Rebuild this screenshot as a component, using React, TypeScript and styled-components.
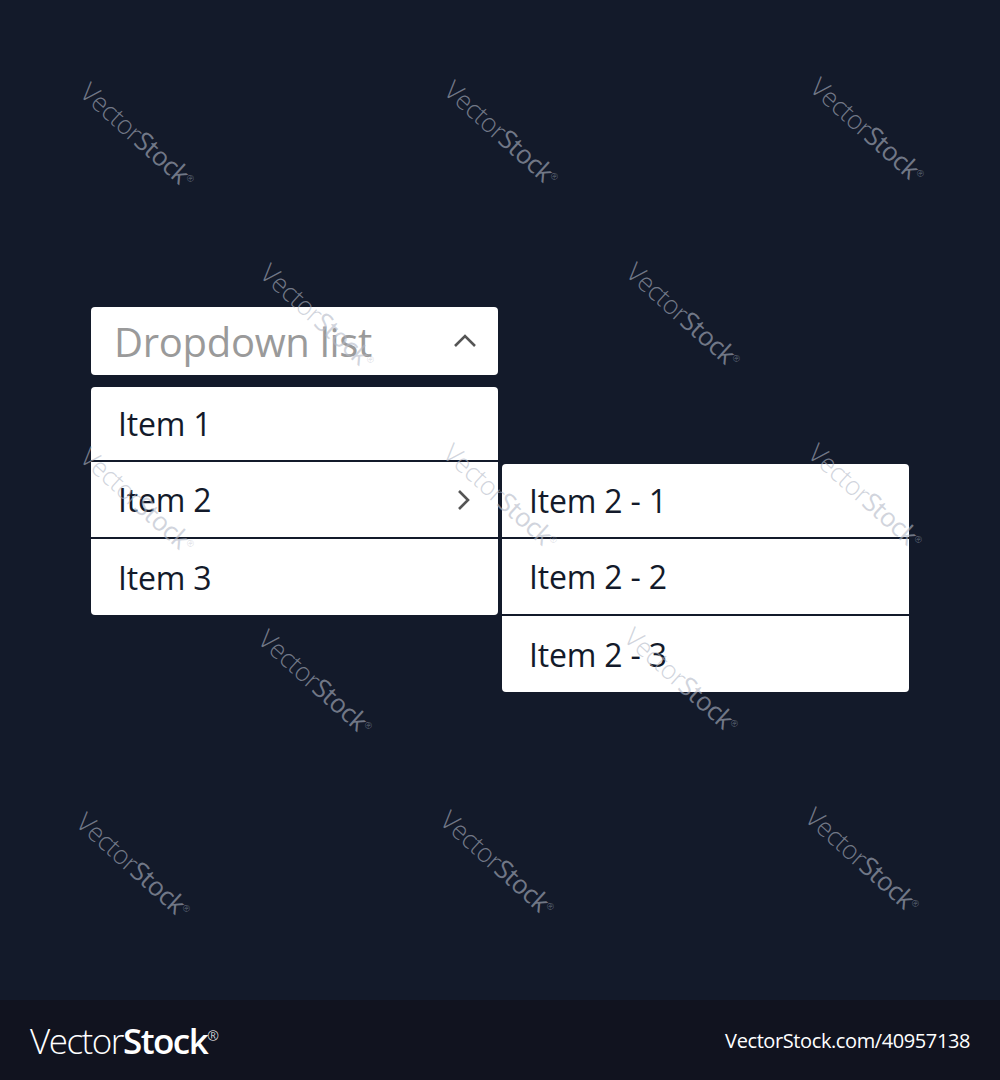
import React from 'react';
import styled, { createGlobalStyle } from 'styled-components';

const GlobalStyle = createGlobalStyle`
  html, body {
    margin: 0;
    padding: 0;
    background: #131a2a;
  }
  * {
    box-sizing: border-box;
  }
`;

const marks = [
  [138, 135], [502, 133], [868, 130],
  [318, 316], [684, 315],
  [138, 500], [501, 496], [866, 496],
  [316, 682], [682, 680],
  [134, 865], [498, 863], [863, 860],
];

const subItems = ['Item 2 - 1', 'Item 2 - 2', 'Item 2 - 3'];

function ChevronUp() {
  return (
    <svg width="24" height="14" viewBox="0 0 24 14">
      <path d="M2 12 L12 2 L22 12" fill="none" stroke="#555" strokeWidth="2.6" />
    </svg>
  );
}

function ChevronRight() {
  return (
    <svg width="14" height="22" viewBox="0 0 14 22">
      <path d="M2 2 L11 11 L2 20" fill="none" stroke="#555" strokeWidth="2.6" />
    </svg>
  );
}

function App() {
  return (
    <>
      <GlobalStyle />
      <Page>
        <Canvas>
          <Menus>
            <Column>
              <Select>
                <Placeholder>Dropdown list</Placeholder>
                <ChevronUp />
              </Select>
              <List>
                <Row>
                  <Label>Item 1</Label>
                </Row>
                <Row>
                  <Label>Item 2</Label>
                  <ChevronRight />
                </Row>
                <Row>
                  <Label>Item 3</Label>
                </Row>
              </List>
            </Column>
            <SubList>
              {subItems.map((t) => (
                <Row key={t}>
                  <Label>{t}</Label>
                </Row>
              ))}
            </SubList>
          </Menus>
          {marks.map(([x, y]) => (
            <Mark key={`${x}-${y}`} style={{ left: x, top: y }}>
              Vector<b>Stock</b>
              <sup>®</sup>
            </Mark>
          ))}
        </Canvas>
        <Footer>
          <Brand>
            Vector<strong>Stock</strong>
            <sup>®</sup>
          </Brand>
          <ImageId>VectorStock.com/40957138</ImageId>
        </Footer>
      </Page>
    </>
  );
}

export default App;

const Page = styled.div`
  width: 1000px;
  height: 1080px;
  display: flex;
  flex-direction: column;
  font-family: 'Open Sans', 'Liberation Sans', sans-serif;
`;

const Canvas = styled.div`
  position: relative;
  height: 1000px;
  overflow: hidden;
  background: #131a2a;
  padding: 307px 0 0 91px;
`;

const Menus = styled.div`
  display: flex;
  align-items: flex-start;
  gap: 4px;
`;

const Column = styled.div`
  width: 407px;
  display: flex;
  flex-direction: column;
  gap: 12px;
`;

const Select = styled.div`
  height: 68px;
  background: #fff;
  border-radius: 4px;
  display: flex;
  align-items: center;
  justify-content: space-between;
  padding: 0 21px 0 23px;
`;

const Placeholder = styled.span`
  font-size: 40px;
  color: #9a9a9a;
  letter-spacing: -0.3px;
`;

const List = styled.div`
  background: #fff;
  border-radius: 4px;
  display: flex;
  flex-direction: column;
  overflow: hidden;
`;

const SubList = styled(List)`
  width: 407px;
  margin-top: 157px;
`;

const Row = styled.div`
  height: 77px;
  display: flex;
  align-items: center;
  justify-content: space-between;
  padding: 0 27px 0 27px;
  & + & {
    border-top: 2px solid #131a2a;
  }
  &:first-child {
    height: 73px;
  }
  &:last-child {
    height: 78px;
  }
`;

const Label = styled.span`
  font-size: 32px;
  color: #131a2a;
  letter-spacing: -0.2px;
`;

const Mark = styled.div`
  position: absolute;
  transform: translate(-50%, -50%) rotate(42deg);
  font-size: 26px;
  font-weight: 300;
  white-space: nowrap;
  color: rgba(178, 184, 198, 0.6);
  pointer-events: none;
  letter-spacing: -0.5px;

  b {
    font-weight: 400;
  }

  sup {
    font-size: 9px;
  }
`;

const Footer = styled.div`
  height: 80px;
  background: #11131f;
  display: flex;
  align-items: center;
  justify-content: space-between;
  padding: 0 30px 0 30px;
  color: #fff;
`;

const Brand = styled.div`
  font-size: 35px;
  font-weight: 300;
  letter-spacing: -1.5px;

  strong {
    font-weight: 600;
  }

  sup {
    font-size: 14px;
    font-weight: 300;
  }
`;

const ImageId = styled.div`
  font-size: 20px;
  letter-spacing: -0.4px;
`;
